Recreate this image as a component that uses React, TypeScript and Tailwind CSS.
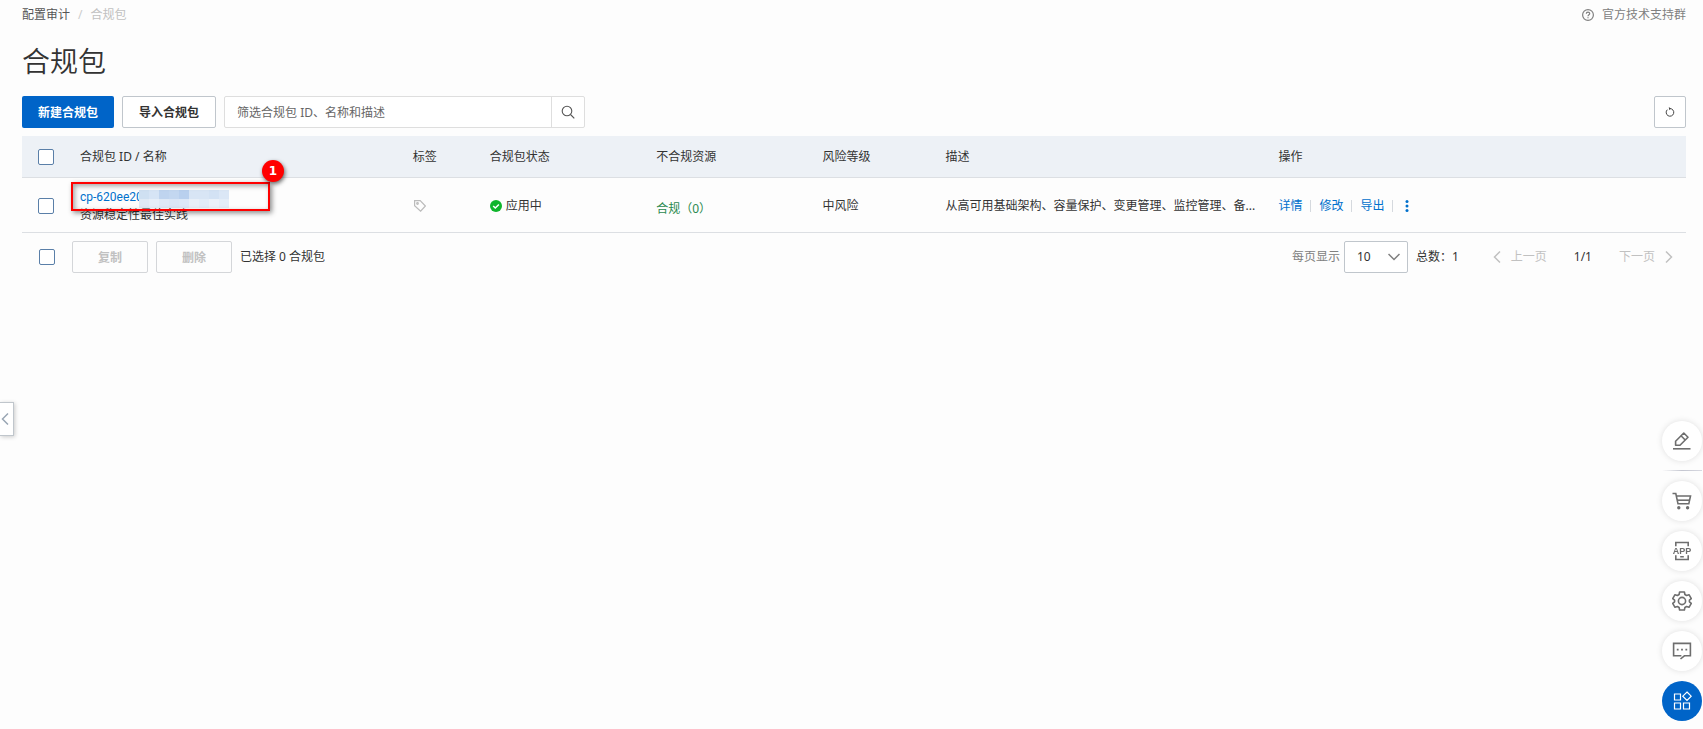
import { ReactNode } from 'react';
import clsx from 'clsx';

const mosaic = [
  ['#cfe0f2', '#d6e4f5', '#bfd4ef', '#c3d7f0', '#b9d0ee', '#d8e5f5', '#d8e5f5', '#d3e2f4', '#dbe7f6'],
  ['#e0eaf5', '#e6eef8', '#dfe9f6', '#dbe6f6', '#dde8f7', '#e8eff8', '#e2ecf8', '#ebf1f9', '#e4edf8'],
];

const CheckBox = ({ label }: { label: string }) => (
  <input
    type="checkbox"
    aria-label={label}
    className="block size-4 appearance-none rounded-xs border border-[#5a7fa8] bg-white checked:bg-[#0064c8]"
  />
);

const Chevron = ({ d, className }: { d: string; className?: string }) => (
  <svg viewBox="0 0 12 12" className={clsx('size-3', className)} fill="none" stroke="currentColor" strokeWidth="1.5">
    <path d={d} />
  </svg>
);

const LEFT = 'M9 0.5L3.5 6L9 11.5';
const RIGHT = 'M3 0.5L8.5 6L3 11.5';
const DOWN = 'M0.5 3L6 8.5L11.5 3';

const FloatButton = ({
  label,
  primary,
  children,
}: {
  label: string;
  primary?: boolean;
  children: ReactNode;
}) => (
  <button
    type="button"
    aria-label={label}
    className={clsx(
      'flex size-10 items-center justify-center rounded-full',
      primary ? 'bg-[#0064c8] text-white' : 'bg-white text-[#6e6e6e] shadow-[0_0_6px_rgba(0,0,0,0.12)]',
    )}
  >
    <svg
      viewBox="0 0 20 20"
      className="size-5"
      fill="none"
      stroke="currentColor"
      strokeWidth={primary ? 1.2 : 1.6}
    >
      {children}
    </svg>
  </button>
);

const FloatBar = () => (
  <aside className="fixed right-px bottom-2 flex flex-col gap-2.5">
    <FloatButton label="反馈">
      <path d="M1 17.8H18.5" />
      <path d="M3.6 14.2V10.2L11.8 2L16 6.2L8 14.2Z" strokeLinejoin="round" />
      <path d="M9 4.8L13.2 9" />
    </FloatButton>
    <div className="-mt-px h-px bg-linear-to-r from-transparent via-[#c4c6d0] to-[#d9dae2]" />
    <FloatButton label="购物车">
      <path d="M0.5 2.5H3.8L6 12.8H16.8L18.5 5H4.4" />
      <path d="M5 9.2H17.4" />
      <circle cx="6.8" cy="16.8" r="0.9" fill="currentColor" />
      <circle cx="15.6" cy="16.8" r="0.9" fill="currentColor" />
    </FloatButton>
    <FloatButton label="APP">
      <path d="M3.8 5.2V1.5H16.2V5.2M3.8 14.2V18.5H16.2V14.2M8.2 15.8H11.8" />
      <text
        x="10"
        y="13"
        textAnchor="middle"
        fontSize="9"
        fontWeight="700"
        fill="currentColor"
        stroke="none"
        className="font-['Liberation_Sans']"
      >
        APP
      </text>
    </FloatButton>
    <FloatButton label="设置">
      <path
        d="M7.6 1H12.4L12.9 3.5L14.6 4.5L17 3.7L19.3 7.6L17.4 9.2V10.8L19.3 12.4L17 16.3L14.6 15.5L12.9 16.5L12.4 19H7.6L7.1 16.5L5.4 15.5L3 16.3L0.7 12.4L2.6 10.8V9.2L0.7 7.6L3 3.7L5.4 4.5L7.1 3.5Z"
        strokeLinejoin="round"
      />
      <circle cx="10" cy="10" r="3.6" />
    </FloatButton>
    <FloatButton label="咨询">
      <path d="M8.5 18L12.4 14.8H18.4V2.4H1.6V14.8H9.4" />
      <path d="M4.8 8.6H6.6M9.1 8.6H10.9M13.4 8.6H15.2" />
    </FloatButton>
    <FloatButton label="更多" primary>
      <path d="M2.5 3H8.5V9H2.5ZM2.5 12H8.5V18H2.5ZM11.5 12H17.5V18H11.5ZM15 1L19.2 5.2L15 9.4L10.8 5.2Z" />
    </FloatButton>
  </aside>
);

const Divider = () => <span className="mx-2 h-3 w-px bg-[#d5d9de]" />;

const App = () => {
  return (
    <div className="min-h-screen bg-[#fdfdfd] pr-[17px] pl-[22px] font-['Noto_Sans','Noto_Sans_CJK_SC',sans-serif] text-xs leading-[18px] text-[#333]">
      <header className="flex items-center justify-between pt-1.5">
        <nav className="flex">
          <a href="#" className="text-[#555]">
            配置审计
          </a>
          <span className="mx-2 text-[#ccc]">/</span>
          <span className="text-[#c1c1c1]">合规包</span>
        </nav>
        <a href="#" className="flex items-center gap-2 text-[#808080]">
          <svg viewBox="0 0 12 12" className="size-3" fill="none" stroke="currentColor" strokeWidth="1.2">
            <circle cx="6" cy="6" r="5.4" />
            <path d="M4.3 4.8C4.3 2.5 7.7 2.5 7.7 4.7C7.7 5.8 6 5.8 6 7.2M6 8.2V9.3" />
          </svg>
          官方技术支持群
        </a>
      </header>

      <h1 className="mt-4 text-[28px] leading-[42px] font-[350]">合规包</h1>

      <div className="mt-3.5 flex h-8 items-stretch gap-2">
        <button type="button" className="rounded-xs bg-[#0064c8] px-4 pt-0.5 font-bold text-white">
          新建合规包
        </button>
        <button type="button" className="rounded-xs border border-[#c0c6cc] bg-white px-4 pt-0.5 font-bold">
          导入合规包
        </button>
        <form className="flex w-[361px] rounded-xs border border-[#dedede] bg-white">
          <input
            type="text"
            aria-label="筛选合规包"
            placeholder="筛选合规包 ID、名称和描述"
            className="min-w-0 flex-1 px-3 pt-0.5 outline-none placeholder:text-[#666]"
          />
          <button
            type="button"
            aria-label="搜索"
            className="flex w-[33px] items-center justify-center border-l border-[#dedede]"
          >
            <svg viewBox="0 0 14 14" className="size-3.5" fill="none" stroke="#555" strokeWidth="1.1">
              <circle cx="6" cy="6" r="4.8" />
              <path d="M9.5 9.5L13.3 13.3" />
            </svg>
          </button>
        </form>
        <button
          type="button"
          aria-label="刷新"
          className="ml-auto flex w-8 items-center justify-center rounded-xs border border-[#c0c6cc] bg-white"
        >
          <svg viewBox="0 0 10 10" className="size-2.5" fill="none" stroke="#444">
            <path d="M5 1.6A3.8 3.8 0 1 1 2.3 2.7" />
            <path d="M3.8 0L5.8 1.6L4.2 3.2Z" fill="#444" stroke="none" />
          </svg>
        </button>
      </div>

      <table className="mt-2 w-full table-fixed text-left">
        <colgroup>
          <col className="w-[42px]" />
          <col className="w-[20%]" />
          <col className="w-[77px]" />
          <col className="w-[10%]" />
          <col className="w-[10%]" />
          <col className="w-[123px]" />
          <col className="w-[20%]" />
          <col />
        </colgroup>
        <thead>
          <tr className="h-[41px] border-b border-[#dcdfe3] bg-[#edf1f6] [&>th]:pt-0.5 [&>th]:font-normal">
            <th className="pl-4">
              <CheckBox label="全选" />
            </th>
            <th className="px-4">合规包 ID / 名称</th>
            <th className="px-4">标签</th>
            <th className="px-4">合规包状态</th>
            <th className="px-4">不合规资源</th>
            <th className="px-4">风险等级</th>
            <th className="px-4">描述</th>
            <th className="px-4">操作</th>
          </tr>
        </thead>
        <tbody>
          <tr className="h-[55px] border-b border-[#dcdfe3]">
            <td className="pt-0.5 pl-4">
              <CheckBox label="选择 资源稳定性最佳实践" />
            </td>
            <td className="px-4 pt-0.5">
              <div className="relative">
                <a href="#" className="font-[Roboto] text-[#0070cc]">
                  cp-620ee20
                </a>
                <p>资源稳定性最佳实践</p>
                <div className="absolute top-0.5 left-[59px] grid w-[90px] grid-cols-9">
                  {mosaic.flat().map((color, i) => (
                    <i key={i} className="h-[9px]" style={{ backgroundColor: color }} />
                  ))}
                </div>
                <div className="absolute -top-1.5 -left-[9px] h-[29px] w-[199px] border-2 border-[#f00] shadow-[2px_2px_5px_rgba(0,0,0,0.45),inset_2px_2px_5px_rgba(0,0,0,0.35)]">
                  <span className="absolute -top-6 -right-4 flex size-[22px] items-center justify-center rounded-full bg-[#f00] font-['DejaVu_Sans'] font-bold text-white shadow-[1px_2px_4px_rgba(0,0,0,0.6)]">
                    1
                  </span>
                </div>
              </div>
            </td>
            <td className="px-4 pt-0.5">
              <button type="button" aria-label="标签" className="flex pl-px text-[#bbb]">
                <svg viewBox="0 0 12 12" className="size-3" fill="none" stroke="currentColor" strokeWidth="1.2">
                  <path d="M0.6 0.6H6.2L11.4 6L6.6 11.2L0.6 5.8Z" />
                  <circle cx="3.5" cy="3.5" r="0.8" />
                </svg>
              </button>
            </td>
            <td className="px-4 pt-0.5">
              <div className="flex items-center gap-1">
                <svg viewBox="0 0 12 12" className="size-3">
                  <circle cx="6" cy="6" r="6" fill="#0fb52c" />
                  <path d="M3.2 6L5.3 8L8.9 4.5" fill="none" stroke="#fff" strokeWidth="1.5" />
                </svg>
                应用中
              </div>
            </td>
            <td className="px-4 pt-2 text-[#2a8a50]">合规（0）</td>
            <td className="px-4 pt-0.5">中风险</td>
            <td className="pt-0.5 pl-4 whitespace-nowrap">从高可用基础架构、容量保护、变更管理、监控管理、备...</td>
            <td className="px-4 pt-0.5">
              <div className="flex items-center text-[#0070cc]">
                <a href="#">详情</a>
                <Divider />
                <a href="#">修改</a>
                <Divider />
                <a href="#">导出</a>
                <Divider />
                <button type="button" aria-label="更多操作" className="px-1">
                  <svg viewBox="0 0 4 12" className="h-3 w-1" fill="currentColor">
                    <circle cx="2" cy="1.6" r="1.5" />
                    <circle cx="2" cy="6" r="1.5" />
                    <circle cx="2" cy="10.4" r="1.5" />
                  </svg>
                </button>
              </div>
            </td>
          </tr>
        </tbody>
      </table>

      <footer className="mt-2 flex h-8 items-center">
        <div className="mx-[17px]">
          <CheckBox label="全选当前页" />
        </div>
        <button
          type="button"
          disabled
          className="mr-2 h-8 w-[76px] rounded-xs border border-[#d4d6d9] pt-0.5 font-bold text-[#c1c1c1]"
        >
          复制
        </button>
        <button
          type="button"
          disabled
          className="mr-2 h-8 w-[76px] rounded-xs border border-[#d4d6d9] pt-0.5 font-bold text-[#c1c1c1]"
        >
          删除
        </button>
        <span>已选择 0 合规包</span>

        <div className="ml-auto flex items-center">
          <label htmlFor="page-size" className="mr-1 text-[#808080]">
            每页显示
          </label>
          <div className="relative mr-2">
            <select
              id="page-size"
              className="block h-8 w-16 appearance-none rounded-xs border border-[#c0c6cc] bg-white px-3"
            >
              <option>10</option>
              <option>20</option>
              <option>50</option>
            </select>
            <Chevron d={DOWN} className="pointer-events-none absolute top-2.5 right-2 text-[#808080]" />
          </div>
          <span>总数：1</span>
          <button type="button" disabled className="ml-8 flex items-center gap-2 text-[#c1c1c1]">
            <Chevron d={LEFT} />
            上一页
          </button>
          <span className="mx-[27px]">1/1</span>
          <button type="button" disabled className="mr-[11px] flex items-center gap-2 text-[#c1c1c1]">
            下一页
            <Chevron d={RIGHT} />
          </button>
        </div>
      </footer>

      <button
        type="button"
        aria-label="展开侧栏"
        className="fixed top-[402px] left-0 flex h-[34px] w-3.5 items-center border border-l-0 border-[#c0c6cc] bg-white text-[#9aa7b5] shadow-[1px_1px_4px_rgba(0,0,0,0.2)]"
      >
        <Chevron d={LEFT} className="-ml-px" />
      </button>

      <FloatBar />
    </div>
  );
};

export default App;
